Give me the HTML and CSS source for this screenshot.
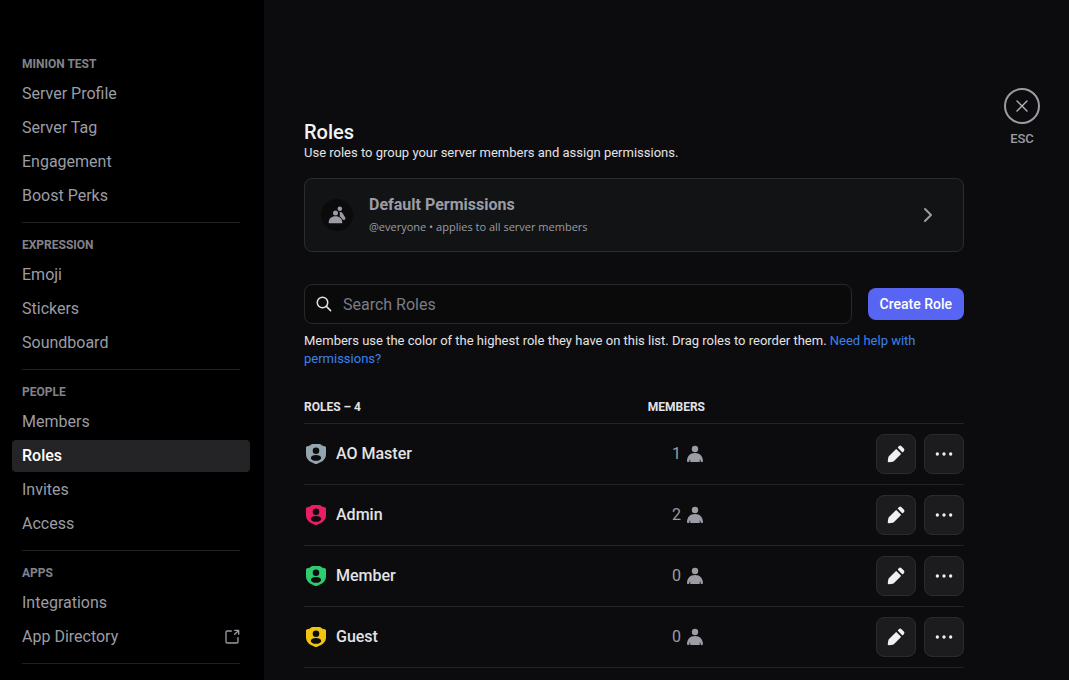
FILE: index.html
```html
<!DOCTYPE html>
<html lang="en">
<head>
<meta charset="utf-8">
<title>Server Settings – Roles</title>
<link rel="stylesheet" href="styles.css">
</head>
<body>
<svg class="sprite" aria-hidden="true">
  <symbol id="pencil" viewBox="0 0 24 24"><path d="m14.500 4.900 4.600 4.600a1 1 0 0 0 1.400 0l.9-.9a2.300 2.300 0 0 0 0-3.200l-2.800-2.800a2.300 2.300 0 0 0-3.200 0l-.9.9a1 1 0 0 0 0 1.400ZM2.110 20.160l.73-4.220a3 3 0 0 1 .83-1.610l7.870-7.870a1 1 0 0 1 1.420 0l4.580 4.580a1 1 0 0 1 0 1.420l-7.870 7.870a3 3 0 0 1-1.600.83l-4.230.73a1.500 1.500 0 0 1-1.730-1.730Z"/></symbol>
  <symbol id="more" viewBox="0 0 24 24"><circle cx="4" cy="12" r="2"/><circle cx="12" cy="12" r="2"/><circle cx="20" cy="12" r="2"/></symbol>
  <symbol id="person" viewBox="0 0 20 20"><circle cx="10" cy="5" r="3.2"/><path d="M10 9c-5 0-8 3.400-8 8.200 0 .5.3.8.8.8h.9c.3 0 .5-.2.6-.5l.5-1.700c.1-.3.500-.2.500.1l-.2 1.300c0 .5.2.8.7.800h8.400c.5 0 .7-.3.700-.800l-.2-1.300c0-.3.400-.4.500-.1l.5 1.700c.1.3.3.5.6.500h.900c.5 0 .8-.3.8-.8C18 12.400 15 9 10 9Z"/></symbol>
  <symbol id="shield" viewBox="0 0 24 24"><path fill-rule="evenodd" d="M8.300 2h7.400c.6 0 1 .3 1.400.7.6.7 1.300 1.100 2.300 1.300l1.500.3c.7.1 1.100.5 1.100 1.200v7c0 3.200-1.800 5.400-4 6.900l-4.700 2.300c-.8.4-1.800.4-2.600 0L6 19.400c-2.200-1.500-4-3.700-4-6.900v-7c0-.7.4-1.100 1.100-1.200L4.600 4c1-.2 1.700-.6 2.300-1.300.4-.4.8-.7 1.400-.7ZM12 5.400a3.300 3.300 0 1 0 0 6.600 3.300 3.300 0 0 0 0-6.600Zm0 7.600c-2.900 0-5.200 1.300-5.200 2.900 0 1.500 2.600 2.900 5.200 2.900s5.200-1.400 5.200-2.900c0-1.600-2.300-2.900-5.200-2.900Z"/></symbol>
</svg>
<div class="app">
  <nav class="sidebar" aria-label="Server settings">
    <section class="nav-group">
      <h2 class="nav-heading">MINION TEST</h2>
      <a class="nav-item" href="#">Server Profile</a>
      <a class="nav-item" href="#">Server Tag</a>
      <a class="nav-item" href="#">Engagement</a>
      <a class="nav-item" href="#">Boost Perks</a>
    </section>
    <section class="nav-group">
      <h2 class="nav-heading">EXPRESSION</h2>
      <a class="nav-item" href="#">Emoji</a>
      <a class="nav-item" href="#">Stickers</a>
      <a class="nav-item" href="#">Soundboard</a>
    </section>
    <section class="nav-group">
      <h2 class="nav-heading">PEOPLE</h2>
      <a class="nav-item" href="#">Members</a>
      <a class="nav-item selected" href="#" aria-current="page">Roles</a>
      <a class="nav-item" href="#">Invites</a>
      <a class="nav-item" href="#">Access</a>
    </section>
    <section class="nav-group">
      <h2 class="nav-heading">APPS</h2>
      <a class="nav-item" href="#">Integrations</a>
      <a class="nav-item" href="#">App Directory
        <svg class="launch" viewBox="0 0 24 24" aria-hidden="true"><path d="M15 2a1 1 0 0 1 1-1h6a1 1 0 0 1 1 1v6a1 1 0 1 1-2 0V4.410l-4.300 4.300a1 1 0 1 1-1.400-1.420L19.580 3H16a1 1 0 0 1-1-1Z"/><path d="M5 2a3 3 0 0 0-3 3v14a3 3 0 0 0 3 3h14a3 3 0 0 0 3-3v-6a1 1 0 1 0-2 0v6a1 1 0 0 1-1 1H5a1 1 0 0 1-1-1V5a1 1 0 0 1 1-1h6a1 1 0 1 0 0-2H5Z"/></svg>
      </a>
    </section>
    <hr class="nav-divider">
  </nav>
  <div class="region">
    <main class="content">
      <h1 class="title">Roles</h1>
      <p class="description">Use roles to group your server members and assign permissions.</p>
      <button class="default-card" type="button">
        <span class="default-icon"><svg viewBox="0 0 24 24" aria-hidden="true"><circle cx="15.400" cy="4.600" r="2.700"/><path d="M15 8.700c1-.7 2.700-.3 3.500.8l3.200 5.200c1.500 2.600-1.300 4.400-3.200 2.300-.9-1.500-2-2.700-3.500-3.700.7-1.500.7-3.100 0-4.600Z"/><circle cx="10.200" cy="9.500" r="3"/><path d="M10.200 13.500C5.400 13.500 2 16.500 2 21c0 .7.4 1 1 1h14.400c.6 0 1-.3 1-1 0-4.500-3.400-7.500-8.200-7.500Z"/></svg></span>
        <span class="default-text"><span class="default-title">Default Permissions</span><span class="default-sub">@everyone • applies to all server members</span></span>
        <svg class="chevron" viewBox="0 0 24 24" aria-hidden="true"><path d="M9.300 5.300a1 1 0 0 0 0 1.400l5.290 5.300-5.300 5.300a1 1 0 1 0 1.420 1.400l6-6a1 1 0 0 0 0-1.400l-6-6a1 1 0 0 0-1.420 0Z"/></svg>
      </button>
      <div class="toolbar">
        <label class="search">
          <svg viewBox="0 0 24 24" aria-hidden="true"><circle cx="10" cy="10" r="7"/><path d="m15.200 15.200 5.600 5.600"/></svg>
          <input type="search" placeholder="Search Roles" aria-label="Search Roles">
        </label>
        <button class="create" type="button">Create Role</button>
      </div>
      <p class="hint">Members use the color of the highest role they have on this list. Drag roles to reorder them. <a href="#">Need help with permissions?</a></p>
      <table class="roles">
        <thead><tr><th class="name" scope="col">ROLES – 4</th><th class="members" scope="col">MEMBERS</th><td class="actions"></td></tr></thead>
        <tbody>
          <tr><td><span class="role"><svg class="gray"><use href="#shield"/></svg>AO Master</span></td><td><span class="count">1<svg><use href="#person"/></svg></span></td><td><span class="buttons"><button type="button" aria-label="Edit AO Master"><svg><use href="#pencil"/></svg></button><button type="button" aria-label="More for AO Master"><svg><use href="#more"/></svg></button></span></td></tr>
          <tr><td><span class="role"><svg class="pink"><use href="#shield"/></svg>Admin</span></td><td><span class="count">2<svg><use href="#person"/></svg></span></td><td><span class="buttons"><button type="button" aria-label="Edit Admin"><svg><use href="#pencil"/></svg></button><button type="button" aria-label="More for Admin"><svg><use href="#more"/></svg></button></span></td></tr>
          <tr><td><span class="role"><svg class="green"><use href="#shield"/></svg>Member</span></td><td><span class="count">0<svg><use href="#person"/></svg></span></td><td><span class="buttons"><button type="button" aria-label="Edit Member"><svg><use href="#pencil"/></svg></button><button type="button" aria-label="More for Member"><svg><use href="#more"/></svg></button></span></td></tr>
          <tr><td><span class="role"><svg class="yellow"><use href="#shield"/></svg>Guest</span></td><td><span class="count">0<svg><use href="#person"/></svg></span></td><td><span class="buttons"><button type="button" aria-label="Edit Guest"><svg><use href="#pencil"/></svg></button><button type="button" aria-label="More for Guest"><svg><use href="#more"/></svg></button></span></td></tr>
        </tbody>
      </table>
    </main>
    <div class="tools">
      <button class="close" type="button" aria-labelledby="esc"><svg viewBox="0 0 18 18" aria-hidden="true"><path d="m4 4 10 10M14 4 4 14"/></svg></button>
      <span class="esc" id="esc">ESC</span>
    </div>
  </div>
</div>
</body>
</html>
```
FILE: styles.css
```css
* { box-sizing: border-box; }
body {
  margin: 0;
  background: #0c0c0e;
  color: #e3e3e6;
  font-family: Roboto, sans-serif;
  font-size: 16px;
}
h1, h2, p { margin: 0; }
a { text-decoration: none; }
button, input { font: inherit; color: inherit; }
button { cursor: pointer; }
svg { flex: none; fill: currentColor; }
.sprite { display: none; }
.app { display: flex; height: 100vh; overflow: hidden; }

.sidebar { flex: none; width: 264px; padding: 50px 14px 0 12px; background: #000; overflow: hidden; }
.nav-group { display: flex; flex-direction: column; gap: 2px; }
.nav-group + .nav-group::before { content: ""; height: 1px; margin: 10px 10px 6px; background: #202024; }
.nav-divider { height: 1px; margin: 10px 10px 0; border: 0; background: #202024; }
.nav-heading { height: 26px; padding: 0 10px; color: #82838b; font-size: 12px; font-weight: 700; line-height: 28px; }
.nav-item { display: flex; align-items: center; justify-content: space-between; height: 32px; padding: 0 10px; border-radius: 4px; color: #9b9ca4; line-height: 20px; }
.nav-item.selected { background: #242427; color: #fff; font-weight: 500; }
.launch { width: 16px; height: 16px; }

.region { display: flex; flex: 1; min-width: 0; overflow: hidden; }
.content { flex: 1; min-width: 0; max-width: 740px; padding: 120px 40px 0; }
.title { color: #f2f2f4; font-size: 20px; font-weight: 500; line-height: 24px; }
.description, .hint { font-size: 13px; line-height: 18px; }
.default-card { display: flex; align-items: center; gap: 16px; width: 100%; margin-top: 16px; padding: 16px 24px 16px 16px; border: 1px solid #2b2c2f; border-radius: 8px; background: #121314; color: #9b9ca4; text-align: left; }
.default-icon { display: grid; place-items: center; width: 32px; height: 32px; border-radius: 50%; background: #0b0b0c; }
.default-icon svg { width: 20px; height: 20px; }
.default-text { display: flex; flex: 1; flex-direction: column; gap: 4px; }
.default-title { font-weight: 700; line-height: 20px; }
.default-sub { font-family: "Open Sans", sans-serif; font-size: 11px; line-height: 16px; }
.chevron { width: 24px; height: 24px; }

.toolbar { display: flex; align-items: center; gap: 16px; margin-top: 32px; }
.search { display: flex; flex: 1; align-items: center; gap: 10px; height: 40px; padding: 0 10px; border: 1px solid #28282c; border-radius: 8px; background: #0a0a0b; }
.search svg { width: 18px; height: 18px; fill: none; stroke: currentColor; stroke-width: 2; stroke-linecap: round; }
.search input { flex: 1; min-width: 0; padding: 0; border: 0; outline: 0; background: none; }
.search input::placeholder { color: #7b7c84; opacity: 1; }
.create { height: 32px; padding: 0 12px; border: 0; border-radius: 8px; background: #5865f2; color: #fff; font-size: 14px; font-weight: 500; }
.hint { margin-top: 8px; }
.hint a { color: #3b82f0; }

.roles { width: 100%; margin-top: 22px; border-collapse: collapse; table-layout: fixed; }
.roles th, .roles td { padding: 0; border-bottom: 1px solid #242427; text-align: left; }
.roles th { height: 33px; padding-top: 2px; font-size: 12px; font-weight: 700; }
.roles tbody td { height: 61px; }
.roles th.members { width: 80px; text-align: right; }
.actions { width: 259px; }
.role, .count, .buttons { display: flex; align-items: center; gap: 8px; }
.role { font-weight: 500; }
.role svg { width: 24px; height: 24px; }
.gray { color: #95a5b0; }
.pink { color: #e91e63; }
.green { color: #2ecc71; }
.yellow { color: #f1c40f; }
.count { justify-content: flex-end; gap: 4px; color: #9b9ca4; }
.count svg { width: 20px; height: 20px; }
.buttons { justify-content: flex-end; }
.buttons button { display: grid; place-items: center; width: 40px; height: 40px; padding: 0; border: 1px solid #2b2b2f; border-radius: 8px; background: #1c1c1f; color: #f0f0f2; }
.buttons svg { width: 20px; height: 20px; }

.tools { display: flex; flex: none; flex-direction: column; align-items: center; width: 36px; padding-top: 88px; }
.close { display: grid; place-items: center; width: 36px; height: 36px; padding: 0; border: 2px solid #9b9ca4; border-radius: 50%; background: none; color: #b4b4ba; }
.close svg { width: 18px; height: 18px; fill: none; stroke: currentColor; stroke-width: 1.4; stroke-linecap: round; }
.esc { margin-top: 6px; color: #9b9ca4; font-size: 13px; font-weight: 500; line-height: 18px; }
```
